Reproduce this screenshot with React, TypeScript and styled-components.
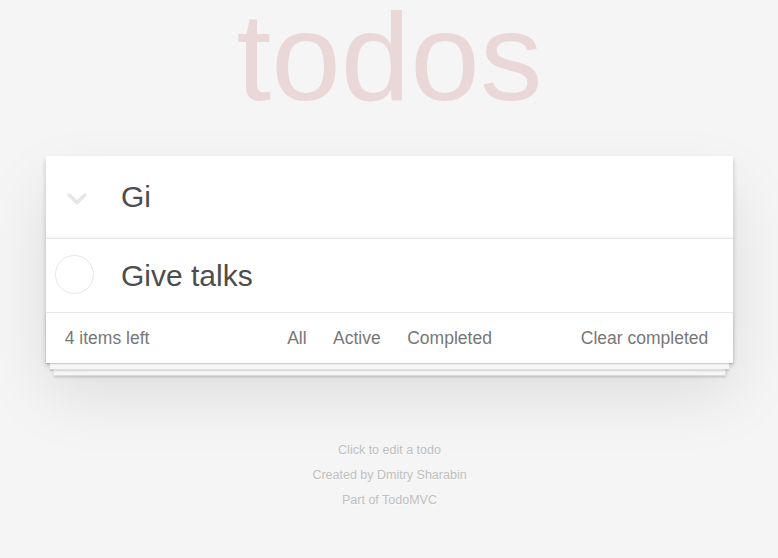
import React from "react"
import styled, { createGlobalStyle } from "styled-components"

type Todo = {
	id: number
	title: string
	completed: boolean
}

const todos: Todo[] = [{ id: 1, title: "Give talks", completed: false }]

const filters = ["All", "Active", "Completed"]

const GlobalStyle = createGlobalStyle`
	html, body {
		margin: 0;
		padding: 0;
	}
	body {
		background: #f5f5f5;
		color: #4d4d4d;
		font-family: "Liberation Sans", Arial, Helvetica, sans-serif;
		font-weight: 300;
		-webkit-font-smoothing: antialiased;
	}
	* {
		box-sizing: border-box;
	}
`

const App = () => {
	return (
		<>
			<GlobalStyle />
			<Page>
				<Title>todos</Title>
				<Card>
					<Header>
						<ToggleAll>
							<svg width="22" height="13" viewBox="0 0 22 13">
								<polyline points="2,2 11,10.5 20,2" fill="none" stroke="#e6e6e6" strokeWidth="3.6" />
							</svg>
						</ToggleAll>
						<NewTodo defaultValue="Gi" />
					</Header>
					<List>
						{todos.map((todo) => (
							<Item key={todo.id}>
								<Check />
								<Label>{todo.title}</Label>
							</Item>
						))}
					</List>
					<Footer>
						<Count>4 items left</Count>
						<Filters>
							{filters.map((f) => (
								<Filter key={f}>{f}</Filter>
							))}
						</Filters>
						<Clear>Clear completed</Clear>
					</Footer>
				</Card>
				<Info>
					<p>Click to edit a todo</p>
					<p>Created by Dmitry Sharabin</p>
					<p>Part of TodoMVC</p>
				</Info>
			</Page>
		</>
	)
}

const Page = styled.section`
	width: 688px;
	margin: 0 auto;
	padding-left: 1px;
`

const Title = styled.h1`
	margin: 0;
	height: 113px;
	font-size: 125px;
	line-height: 113px;
	font-weight: 100;
	text-align: center;
	color: rgba(175, 47, 47, 0.15);
	text-rendering: optimizeLegibility;
`

const Card = styled.div`
	margin-top: 43px;
	background: #fff;
	position: relative;
	box-shadow: 0 2.5px 5px 0 rgba(0, 0, 0, 0.2), 0 31px 62px 0 rgba(0, 0, 0, 0.1);
`

const Header = styled.header`
	display: flex;
	align-items: center;
	height: 83px;
	border-bottom: 1px solid #e6e6e6;
	box-shadow: inset 0 -2px 1px rgba(0, 0, 0, 0.03);
`

const ToggleAll = styled.div`
	width: 61px;
	display: flex;
	justify-content: center;
	align-items: center;
	padding-top: 3px;
`

const NewTodo = styled.input`
	flex: 1;
	height: 100%;
	border: none;
	outline: none;
	background: transparent;
	padding: 0 20px 0 14px;
	font-family: inherit;
	font-weight: inherit;
	font-size: 30px;
	color: #4d4d4d;
`

const List = styled.ul`
	margin: 0;
	padding: 0;
	list-style: none;
`

const Item = styled.li`
	display: flex;
	align-items: center;
	height: 73px;
	padding-left: 9px;
	border-bottom: 1px solid #ededed;
	&:last-child {
		border-bottom: none;
	}
`

const Check = styled.span`
	width: 39px;
	height: 39px;
	margin-top: -2px;
	border-radius: 50%;
	border: 1px solid #e6e6e6;
`

const Label = styled.label`
	margin-left: 27px;
	font-size: 30px;
	line-height: 36px;
	color: #4d4d4d;
`

const Footer = styled.footer`
	position: relative;
	display: grid;
	grid-template-columns: 1fr auto 1fr;
	align-items: center;
	height: 51px;
	padding: 1px 18.75px 0;
	border-top: 1px solid #e6e6e6;
	color: #777;
	font-size: 17.5px;
	&::before {
		content: "";
		position: absolute;
		left: 0;
		right: 0;
		bottom: 0;
		height: 51px;
		overflow: hidden;
		box-shadow: 0 1.25px 1.25px rgba(0, 0, 0, 0.2), 0 10px 0 -3.75px #f6f6f6, 0 11.25px 1.25px -3.75px rgba(0, 0, 0, 0.2),
			0 20px 0 -7.5px #f6f6f6, 0 21.25px 2.5px -7.5px rgba(0, 0, 0, 0.2);
	}
`

const Count = styled.span`
	text-align: left;
`

const Filters = styled.ul`
	display: flex;
	margin: 0;
	padding: 0;
	list-style: none;
`

const Filter = styled.li`
	margin: 0 3.75px;
	padding: 3.75px 8.5px;
	border: 1px solid transparent;
	border-radius: 3.75px;
	color: #777;
`

const Clear = styled.span`
	text-align: right;
	padding-right: 6px;
`

const Info = styled.footer`
	margin-top: 81px;
	color: #bfbfbf;
	font-size: 12.5px;
	text-align: center;
	text-shadow: 0 1px 0 rgba(255, 255, 255, 0.5);
	p {
		margin: 12.5px 0;
		line-height: 1;
	}
`

export default App
